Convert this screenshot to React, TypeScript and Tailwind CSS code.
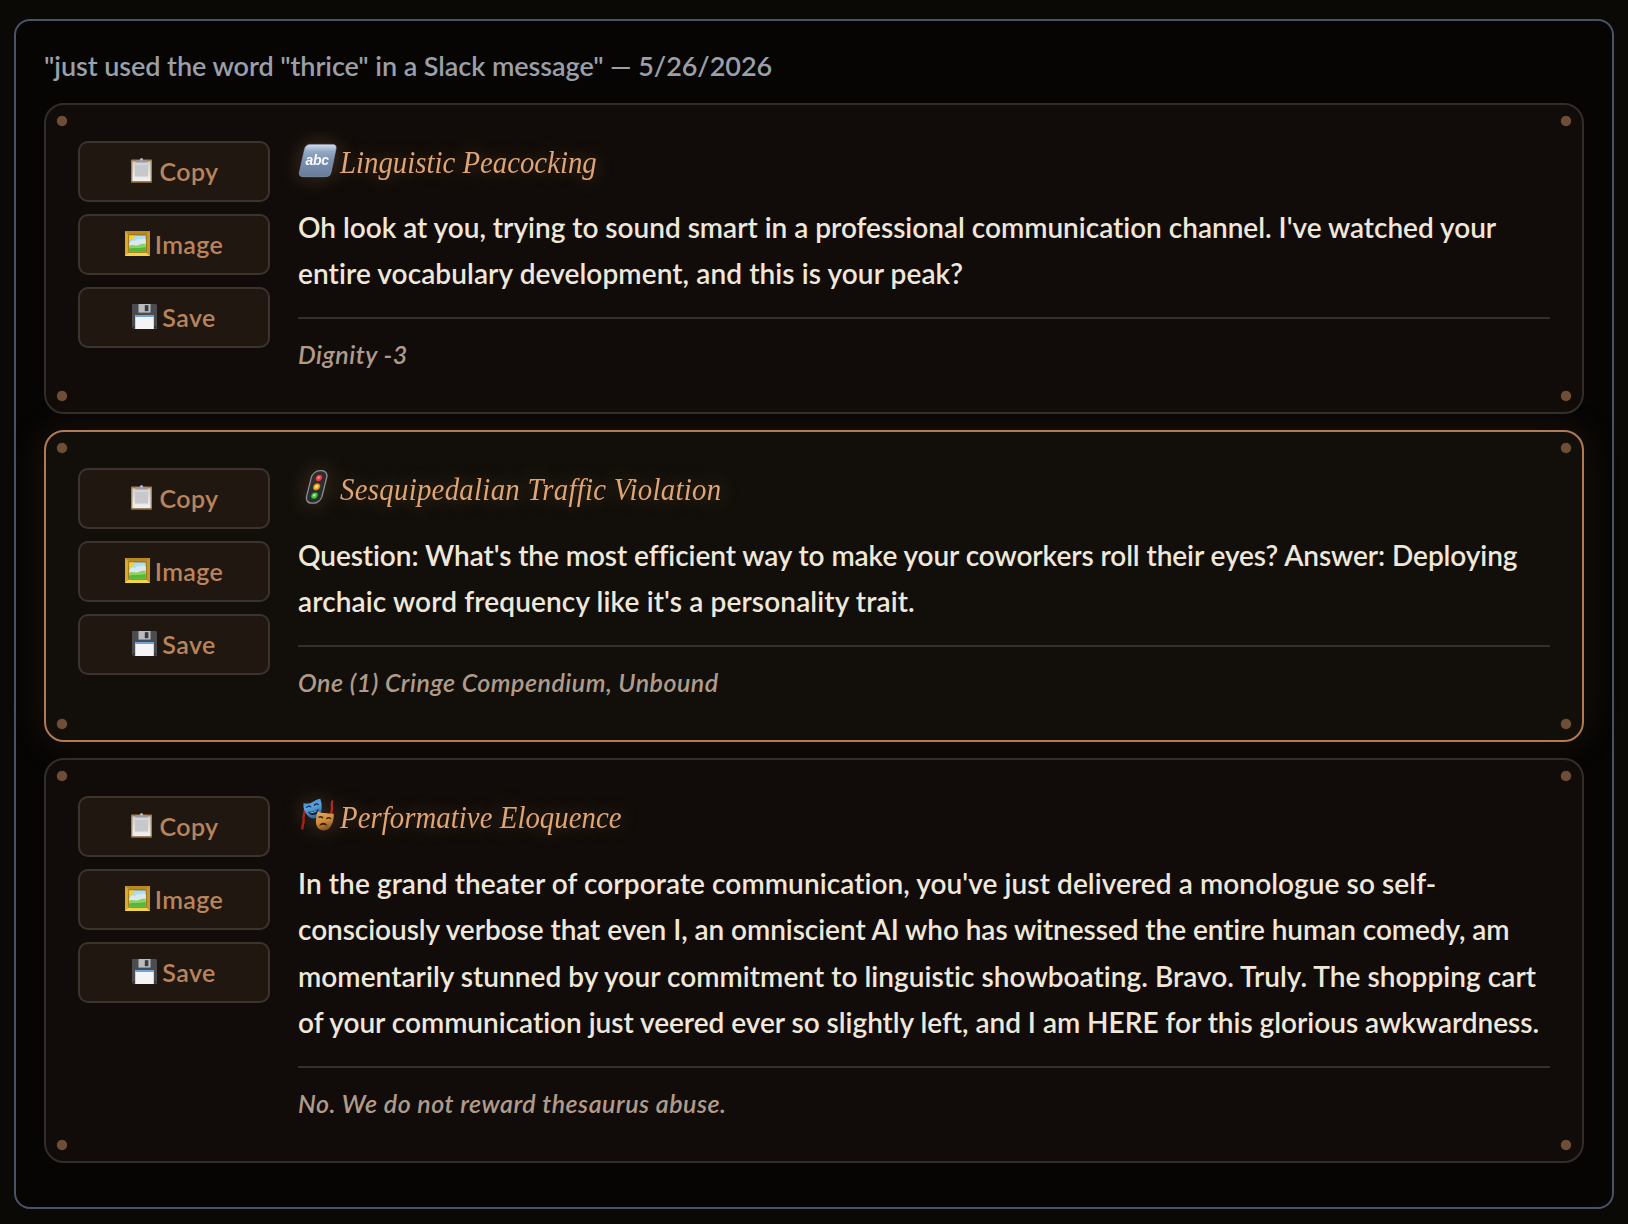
import type { ReactNode } from "react";
import clsx from "clsx";

function ClipboardIcon() {
  return (
    <svg viewBox="0 0 25 25" className="size-[25px]">
      <defs>
        <linearGradient id="paper" x1="0" y1="0" x2="0" y2="1">
          <stop offset="0" stopColor="#cfd0d3" />
          <stop offset="1" stopColor="#f1f1f3" />
        </linearGradient>
      </defs>
      <rect x="2" y="1.6" width="21" height="23.2" rx="0.8" fill="#a77f47" />
      <rect x="2" y="23.4" width="21" height="1.4" fill="#76572f" />
      <rect x="3.4" y="3.4" width="18.2" height="19.8" fill="url(#paper)" />
      <rect x="6" y="7" width="13" height="11.5" fill="#c8c8ca" />
      <path d="M6 4.6 7 2.2h3.6a1.9 1.9 0 0 1 3.8 0H18l1 2.4Z" fill="#9799a3" />
      <circle cx="12.5" cy="1.4" r="1.2" fill="#b9bbc5" />
    </svg>
  );
}

function FrameIcon() {
  return (
    <svg viewBox="0 0 25 25" className="size-[25px]">
      <rect width="25" height="25" fill="#d9a92c" />
      <path d="M0 0h25l-3.6 3.6H3.6Z" fill="#b98a22" />
      <path d="M0 25h25l-3.6-3.6H3.6Z" fill="#f5d548" />
      <path d="M25 0v25l-3.6-3.6V3.6Z" fill="#c4952a" />
      <rect x="3.4" y="3.4" width="18.2" height="18.2" fill="#8a6115" />
      <rect x="4.2" y="4.4" width="16.6" height="16.4" fill="#a9ddf0" />
      <path d="M4.2 12.5c2-3 4-3.4 6-2.4 1.5-2 4-3 5.5-1.5 1.8-1.4 3.5-1.2 5.1 0v7H4.2Z" fill="#dfe7ee" />
      <path d="M4.2 14.8c3-2 6 .8 9-.6 3-1.2 5-1.7 7.6-1.2v7.8H4.2Z" fill="#8ad45e" />
      <path d="M4.2 17.6c4-1.6 8 .6 16.6-1.6v4.8H4.2Z" fill="#55b73a" />
      <path d="M4.2 4.4h5.3c.3 2.6-1.6 4.6-5.3 4.6Z" fill="#f7cf2e" />
    </svg>
  );
}

function FloppyIcon() {
  return (
    <svg viewBox="0 0 25 25" className="size-[25px]">
      <path d="M0 0h24l1 1v24H1.5L0 23.5Z" fill="#4b4c50" />
      <rect x="6.5" y="0" width="12" height="8.6" fill="#b9bbbe" />
      <rect x="12.8" y="1.2" width="3.6" height="6" fill="#3a3b3f" />
      <rect x="3.2" y="11" width="18.6" height="14" fill="#f4f4f6" />
      <rect x="3.2" y="11" width="18.6" height="2" fill="#6ea4dc" />
      <rect x="1" y="22.5" width="1.4" height="1.4" fill="#222" />
      <rect x="22.6" y="22.5" width="1.4" height="1.4" fill="#222" />
    </svg>
  );
}

function AbcIcon() {
  return (
    <svg viewBox="0 0 42 40" className="h-10 w-[42px]">
      <defs>
        <linearGradient id="abc" x1="0" y1="0" x2="0" y2="1">
          <stop offset="0" stopColor="#d3deeb" />
          <stop offset="0.22" stopColor="#93a9c6" />
          <stop offset="0.5" stopColor="#7990b0" />
          <stop offset="1" stopColor="#687d9b" />
        </linearGradient>
      </defs>
      <path
        d="M12.5 2.4H34.5C37.7 2.4 38.7 4.4 38 7.2L33 30.4C32.2 33.6 30.6 34.7 27.6 34.7H5C1.9 34.7.8 32.8 1.5 30L6.5 7.2C7.2 4 9.2 2.4 12.5 2.4Z"
        fill="url(#abc)"
        stroke="#8fa3bd"
        strokeWidth="0.6"
      />
      <text
        x="7.5"
        y="22.5"
        fill="#fafcff"
        textLength="23.5"
        className="font-['Liberation_Sans',sans-serif] text-[14px] font-bold italic"
      >
        abc
      </text>
    </svg>
  );
}

function TrafficLightIcon() {
  return (
    <svg viewBox="0 0 42 40" className="h-10 w-[42px]">
      <g transform="translate(4.1 0) skewX(-14)">
        <rect x="11.3" y="1.6" width="15.4" height="32.6" rx="6.8" fill="#2b2e30" stroke="#8d9193" strokeWidth="1.3" />
        <circle cx="19" cy="9" r="3.7" fill="#7d1c22" />
        <circle cx="19" cy="9" r="2.9" fill="#e5474b" />
        <circle cx="18.7" cy="8.6" r="1.2" fill="#ff9d97" />
        <circle cx="19" cy="17.8" r="3.7" fill="#a35f10" />
        <circle cx="19" cy="17.8" r="2.9" fill="#f5b32a" />
        <circle cx="18.7" cy="17.4" r="1.2" fill="#fff0a0" />
        <circle cx="19" cy="26.6" r="3.7" fill="#1f6a22" />
        <circle cx="19" cy="26.6" r="2.9" fill="#45c53e" />
        <circle cx="18.7" cy="26.2" r="1.2" fill="#b4f79d" />
      </g>
    </svg>
  );
}

function MasksIcon() {
  return (
    <svg viewBox="0 0 42 40" className="h-10 w-[42px]">
      <defs>
        <linearGradient id="joy" x1="0" y1="0" x2="0.4" y2="1">
          <stop offset="0" stopColor="#3f7fc0" />
          <stop offset="0.5" stopColor="#5aa5e2" />
          <stop offset="1" stopColor="#2d6aa8" />
        </linearGradient>
        <linearGradient id="sorrow" x1="0" y1="0" x2="0.3" y2="1">
          <stop offset="0" stopColor="#e6ab5c" />
          <stop offset="0.6" stopColor="#d08c3e" />
          <stop offset="1" stopColor="#8d5522" />
        </linearGradient>
      </defs>
      <path d="M6.8 9.5C8 14.5 4.5 18.5 5.6 23c.5 3-1.6 5.5-1.2 8.5" fill="none" stroke="#a5231d" strokeWidth="2.4" strokeLinecap="round" />
      <path d="M34.2 4.5c-1.2 4.5 1 7-1 11.5-.8 2.5-1.2 4-1 6" fill="none" stroke="#b02a20" strokeWidth="2.4" strokeLinecap="round" />
      <path d="M5.5 6C9 7 11.5 6.8 14.5 5 17 3.6 19 2.2 22.3 1.8 24.2 7.5 24.8 14.5 21 19 18 22.2 13 22.2 10 19 6.5 15 5 11 5.5 6Z" fill="url(#joy)" />
      <path d="M8.7 10.4c1.2-1.4 2.8-1.5 4-.5M16.4 8.4c1-1.6 2.8-2 4-1" fill="none" stroke="#132c4a" strokeWidth="1.3" strokeLinecap="round" />
      <path d="M9.9 14.4c4 .9 7.5 0 10.8-2.6-.3 3.7-2 6-4.8 6.3-2.8.2-4.8-1.2-6-3.7Z" fill="#10243d" />
      <path d="M11.2 14.9c3.2.4 6-.2 8.5-1.9-1.2 2.2-5.7 3.7-8.500 1.900Z" fill="#b9dcf5" />
      <path d="M19.8 14.2c2.5 1.7 4.5 1.5 7.5 1.8 3 .2 5.6 1.2 8.4.4.3 6-1.2 11.9-5 15.4-3 2.4-8.2 2.200-10.900-1-2.900-3.800-2-10.600 0-16.600Z" fill="url(#sorrow)" />
      <path d="M21 20.2c1.2-.8 2.7-.5 3.6.6M28.8 21.5c1.2-1 2.8-.9 3.9.1" fill="none" stroke="#3f210d" strokeWidth="1.4" strokeLinecap="round" />
      <path d="M21.3 29c1.2-4 6.6-4.5 8.4.3-2.6-1.9-5.7-2-8.4-.3Z" fill="#3a1c0b" />
    </svg>
  );
}

type Line = { text: string; tracking: string };

type Roast = {
  title: string;
  titleTracking: string;
  icon: ReactNode;
  lines: Line[];
  bodyMargin: string;
  reward: string;
  height: string;
  featured?: boolean;
};

const roasts: Roast[] = [
  {
    title: "Linguistic Peacocking",
    titleTracking: "tracking-normal",
    icon: <AbcIcon />,
    lines: [
      {
        text: "Oh look at you, trying to sound smart in a professional communication channel. I've watched your",
        tracking: "tracking-[-0.01px]",
      },
      { text: "entire vocabulary development, and this is your peak?", tracking: "tracking-[0.1px]" },
    ],
    bodyMargin: "mt-[22px]",
    reward: "Dignity -3",
    height: "h-[311px]",
  },
  {
    title: "Sesquipedalian Traffic Violation",
    titleTracking: "tracking-[0.32px]",
    icon: <TrafficLightIcon />,
    lines: [
      {
        text: "Question: What's the most efficient way to make your coworkers roll their eyes? Answer: Deploying",
        tracking: "tracking-[-0.07px]",
      },
      { text: "archaic word frequency like it's a personality trait.", tracking: "tracking-[0.13px]" },
    ],
    bodyMargin: "mt-[23px]",
    reward: "One (1) Cringe Compendium, Unbound",
    height: "h-[312px]",
    featured: true,
  },
  {
    title: "Performative Eloquence",
    titleTracking: "tracking-[0.05px]",
    icon: <MasksIcon />,
    lines: [
      {
        text: "In the grand theater of corporate communication, you've just delivered a monologue so self-",
        tracking: "tracking-[0.08px]",
      },
      {
        text: "consciously verbose that even I, an omniscient AI who has witnessed the entire human comedy, am",
        tracking: "tracking-[-0.06px]",
      },
      {
        text: "momentarily stunned by your commitment to linguistic showboating. Bravo. Truly. The shopping cart",
        tracking: "tracking-[0.05px]",
      },
      {
        text: "of your communication just veered ever so slightly left, and I am HERE for this glorious awkwardness.",
        tracking: "tracking-[-0.02px]",
      },
    ],
    bodyMargin: "mt-[23px]",
    reward: "No. We do not reward thesaurus abuse.",
    height: "h-[405px]",
  },
];

const actions = [
  { label: "Copy", icon: <ClipboardIcon /> },
  { label: "Image", icon: <FrameIcon /> },
  { label: "Save", icon: <FloppyIcon /> },
];

const rivets = ["left-[11px] top-[11px]", "right-[11px] top-[11px]", "left-[11px] bottom-[11px]", "right-[11px] bottom-[11px]"];

function RoastCard({ roast }: { roast: Roast }) {
  return (
    <article
      className={clsx(
        "relative flex gap-7 rounded-[20px] border-2 px-8 pt-9",
        roast.height,
        roast.featured
          ? "border-[#b07a52] bg-[#120f0a] shadow-[0_0_40px_rgba(184,115,74,0.13)]"
          : "border-[#322d29] bg-[#110c09]",
      )}
    >
      {rivets.map((position) => (
        <span
          key={position}
          className={clsx("absolute size-[10px] rounded-full bg-[#6f4e37] shadow-[0_0_1px_#6f4e37]", position)}
        />
      ))}

      <div className="flex w-48 shrink-0 flex-col gap-3">
        {actions.map((action) => (
          <button
            key={action.label}
            className="flex h-[61px] shrink-0 items-center justify-center gap-[5px] rounded-[10px] border-2 border-[#3d332d] bg-[#201711] pb-[2px] text-[25px] font-semibold leading-[30px] tracking-[0.4px] text-[#b9845c]"
          >
            {action.icon}
            {action.label}
          </button>
        ))}
      </div>

      <div className="min-w-0 flex-1 pt-px">
        <h2 className="flex h-10 font-['Liberation_Serif',serif] text-[32px] italic leading-10 text-[#dfa574]">
          <span className="shrink-0 drop-shadow-[0_0_10px_rgba(224,165,116,0.25)]">{roast.icon}</span>
          <span
            className={clsx(
              "origin-left scale-x-90 whitespace-nowrap [text-shadow:0_0_20px_rgba(224,165,116,0.35)]",
              roast.titleTracking,
            )}
          >
            {roast.title}
          </span>
        </h2>
        <p className={clsx("text-[28px] font-semibold leading-[46.4px] text-[#efe8da]", roast.bodyMargin)}>
          {roast.lines.map((line) => (
            <span key={line.text} className={clsx("block whitespace-nowrap", line.tracking)}>
              {line.text}
            </span>
          ))}
        </p>
        <p className="mt-5 border-t-2 border-[#35302d] pt-5 text-[25px] font-semibold italic leading-[30px] tracking-[0.5px] text-[#b09b8a]">
          {roast.reward}
        </p>
      </div>
    </article>
  );
}

export default function App() {
  return (
    <main className="h-[1224px] bg-[#0a0905] px-[14px] pt-[19px] font-['Lato',sans-serif]">
      <section className="h-[1190px] rounded-2xl border-2 border-[#4a5266] bg-[#060504] px-7 pt-[25px]">
        <p className="mb-[17px] text-[27px] font-semibold leading-10 tracking-[-0.06px] text-[#9a9fa8]">
          &quot;just used the word &quot;thrice&quot; in a Slack message&quot; — 5/26/2026
        </p>
        <div className="flex flex-col gap-4">
          {roasts.map((roast) => (
            <RoastCard key={roast.title} roast={roast} />
          ))}
        </div>
      </section>
    </main>
  );
}
